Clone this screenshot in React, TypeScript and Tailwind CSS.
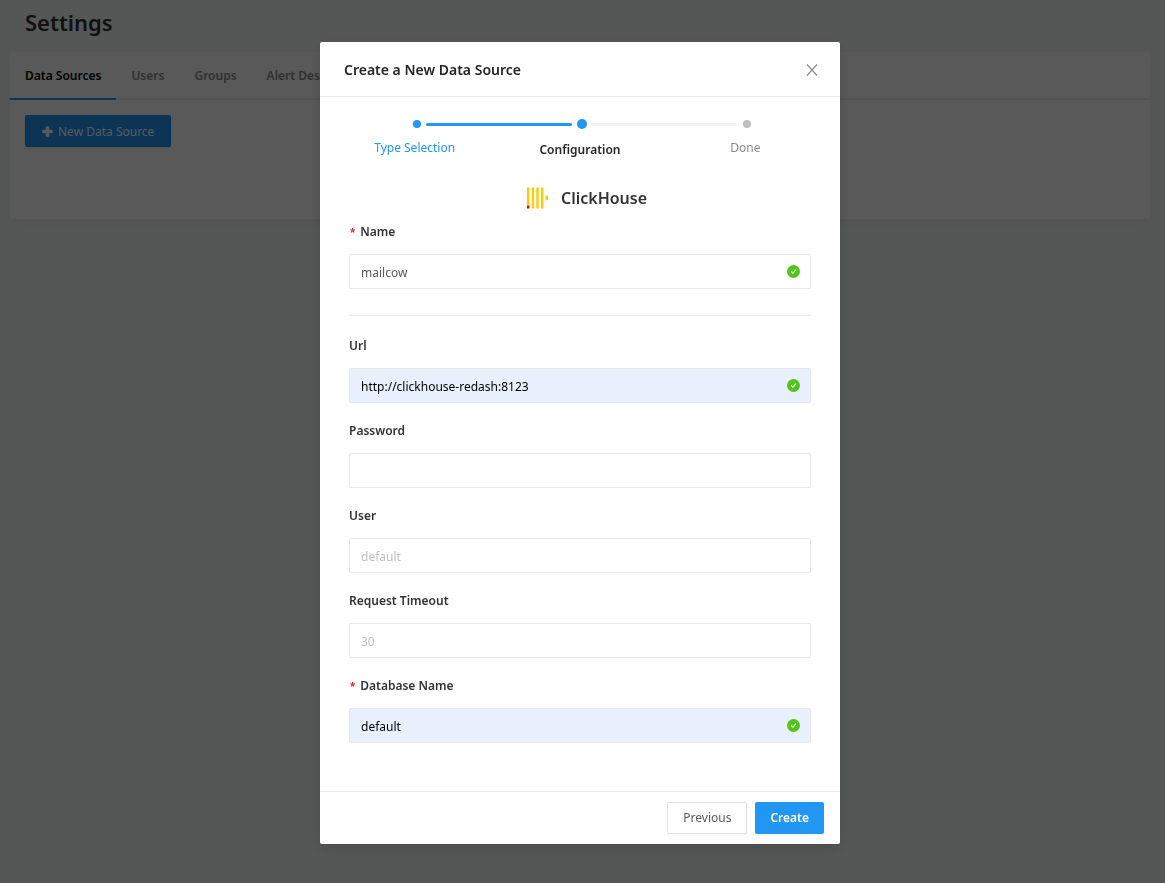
import { useState } from "react";

const TABS = ["Data Sources", "Users", "Groups", "Alert Destinations"];

interface Field {
  id: string;
  label: string;
  type?: string;
  value: string;
  placeholder?: string;
  required?: boolean;
  autofilled?: boolean;
  valid?: boolean;
}

const NAME_FIELD: Field = { id: "name", label: "Name", value: "mailcow", required: true, valid: true };

const FIELDS: Field[] = [
  { id: "url", label: "Url", value: "http://clickhouse-redash:8123", autofilled: true, valid: true },
  { id: "password", label: "Password", type: "password", value: "" },
  { id: "user", label: "User", value: "", placeholder: "default" },
  { id: "timeout", label: "Request Timeout", value: "", placeholder: "30" },
  { id: "dbname", label: "Database Name", value: "default", required: true, autofilled: true, valid: true },
];

function PlusIcon() {
  return (
    <svg width="11" height="11" viewBox="0 0 11 11" fill="currentColor" aria-hidden="true">
      <path d="M3.800 1a.7.7 0 0 1 .7-.7h2a.7.7 0 0 1 .7.7v2.800H10a.7.7 0 0 1 .7.7v2a.7.7 0 0 1-.7.7H7.200V10a.7.7 0 0 1-.7.7h-2a.7.7 0 0 1-.7-.7V7.200H1a.7.7 0 0 1-.7-.7v-2A.7.7 0 0 1 1 3.800h2.800z" />
    </svg>
  );
}

function CloseIcon() {
  return (
    <svg width="12" height="12" viewBox="0 0 12 12" fill="none" stroke="currentColor" strokeWidth="1.2" aria-hidden="true">
      <path d="M1 .5 11 11.500M11 .5 1 11.500" />
    </svg>
  );
}

function ValidIcon() {
  return (
    <svg width="13" height="13" viewBox="0 0 13 13" aria-hidden="true">
      <circle cx="6.500" cy="6.500" r="6.500" fill="#52c41a" />
      <path d="M4.200 6.400 5.900 8.200 8.900 4.600" fill="none" stroke="#fff" strokeWidth="1.100" />
    </svg>
  );
}

function ClickHouseLogo() {
  return (
    <svg width="22" height="22" viewBox="0 0 22 22" aria-hidden="true">
      <g fill="#fc0">
        <path d="M0 .5h2.400v18H0zM4.700 .5h2.400v21H4.700zM9.300 .5h2.400v21H9.300zM14 .5h2.400v21H14zM18.600 8.800H21v4.400h-2.400z" />
      </g>
      <path d="M0 18.500h2.400v3H0z" fill="#f00" />
    </svg>
  );
}

function FormField({ field }: { field: Field }) {
  const [value, setValue] = useState(field.value);
  return (
    <div>
      <label htmlFor={field.id} className="flex h-5 items-center font-semibold text-[#333]">
        {field.required && <span className="mr-1 pt-1 font-['Liberation_Mono',monospace] text-[#f5222d]">*</span>}
        {field.label}
      </label>
      <div className="relative mt-3">
        <input
          id={field.id}
          type={field.type || "text"}
          value={value}
          placeholder={field.placeholder}
          onChange={(e) => setValue(e.target.value)}
          className={`block h-[35px] w-full rounded-xs border border-[#e8e8e8] pt-px pr-8 pl-[11px] outline-none placeholder:text-[#bfbfbf] focus:border-[#2196f3] ${
            field.autofilled ? "bg-[#e8f0fe] text-black" : "bg-white text-[#595959]"
          }`}
        />
        {field.valid && (
          <span className="absolute top-[11px] right-[11px]">
            <ValidIcon />
          </span>
        )}
      </div>
    </div>
  );
}

function Steps() {
  return (
    <ol className="grid grid-cols-3 text-center">
      <li className="relative">
        <div className="flex h-4 items-center justify-center pl-1">
          <span className="size-2 rounded-full bg-[#2196f3]" />
        </div>
        <span className="absolute top-[7px] left-1/2 ml-[11px] h-[3px] w-[calc(100%-19px)] rounded-full bg-[#2196f3]" />
        <p className="mt-[6px] leading-5 text-[#2196f3]">Type Selection</p>
      </li>
      <li className="relative">
        <div className="flex h-4 items-center justify-center pl-1">
          <span className="size-[10px] rounded-full bg-[#2196f3]" />
        </div>
        <span className="absolute top-[7px] left-1/2 ml-[11px] h-[3px] w-[calc(100%-19px)] rounded-full bg-[#f0f0f0]" />
        <p className="mt-2 leading-5 font-semibold text-[#262626]">Configuration</p>
      </li>
      <li>
        <div className="flex h-4 items-center justify-center pl-1">
          <span className="size-2 rounded-full bg-[#bfbfbf]" />
        </div>
        <p className="mt-[6px] leading-5 text-[#8c8c8c]">Done</p>
      </li>
    </ol>
  );
}

function SettingsPage() {
  return (
    <main className="pt-[7px] pr-[15px] pl-[10px]">
      <h1 className="px-[15px] text-[22px] leading-[30px] font-semibold text-[#323232]">Settings</h1>
      <section className="mt-[15px] rounded-[3px] bg-white pb-[72px] shadow-[0_4px_9px_-3px_rgba(102,136,153,0.15)]">
        <nav className="flex border-b-2 border-[#efefef]">
          {TABS.map((tab, i) => (
            <a
              key={tab}
              href="#"
              className={`-mb-[2px] flex h-12 items-center border-b-2 px-[15px] pt-[2px] font-semibold ${
                i === 0 ? "border-[#2196f3] text-black" : "border-transparent text-[#8c8c8c]"
              }`}
            >
              {tab}
            </a>
          ))}
        </nav>
        <div className="px-[15px] pt-[15px]">
          <button type="button" className="flex h-8 items-center gap-[5px] rounded-xs bg-[#2196f3] px-[17px] pt-px text-white shadow-sm">
            <PlusIcon />
            New Data Source
          </button>
        </div>
      </section>
    </main>
  );
}

function CreateSourceDialog() {
  return (
    <div
      role="dialog"
      aria-modal="true"
      aria-labelledby="dialog-title"
      className="w-full max-w-[520px] rounded-xs bg-white shadow-[0_4px_12px_rgba(0,0,0,0.15)]"
    >
      <header className="flex items-center justify-between border-b border-[#e8e8e8] pt-[17px] pr-[22px] pb-[15px] pl-6">
        <h2 id="dialog-title" className="text-sm leading-[22px] font-semibold text-[#262626]">
          Create a New Data Source
        </h2>
        <button type="button" aria-label="Close" className="text-[#8c8c8c]">
          <CloseIcon />
        </button>
      </header>
      <form onSubmit={(e) => e.preventDefault()}>
        <div className="px-3 pt-[19px]">
          <Steps />
        </div>
        <div className="px-[29px] pt-[27px] pb-12">
          <div className="flex h-[22px] items-center justify-center gap-3 pl-[14px]">
            <ClickHouseLogo />
            <h3 className="text-base font-semibold text-[#333]">ClickHouse</h3>
          </div>
          <div className="mt-[13px]">
            <FormField field={NAME_FIELD} />
            <hr className="mt-[26px] mb-5 border-[#e8e8e8]" />
            <div className="flex flex-col gap-[18px]">
              {FIELDS.map((field) => (
                <FormField key={field.id} field={field} />
              ))}
            </div>
          </div>
        </div>
        <footer className="flex justify-end gap-2 border-t border-[#e8e8e8] px-4 py-[10px]">
          <button type="button" className="h-8 rounded-xs border border-[#e0e0e0] bg-white px-[15px] text-[#595959] shadow-[0_2px_0_rgba(0,0,0,0.02)]">
            Previous
          </button>
          <button type="submit" className="h-8 rounded-xs bg-[#2196f3] px-[15px] font-semibold text-white shadow-[0_2px_0_rgba(0,0,0,0.04)]">
            Create
          </button>
        </footer>
      </form>
    </div>
  );
}

export default function App() {
  return (
    <div className="min-h-screen bg-[#f4f9f7] font-['Noto_Sans','Open_Sans',sans-serif] text-xs">
      <SettingsPage />
      <div className="fixed inset-0 flex items-start justify-center overflow-y-auto bg-black/65 pt-[42px] pr-[5px]">
        <CreateSourceDialog />
      </div>
    </div>
  );
}
